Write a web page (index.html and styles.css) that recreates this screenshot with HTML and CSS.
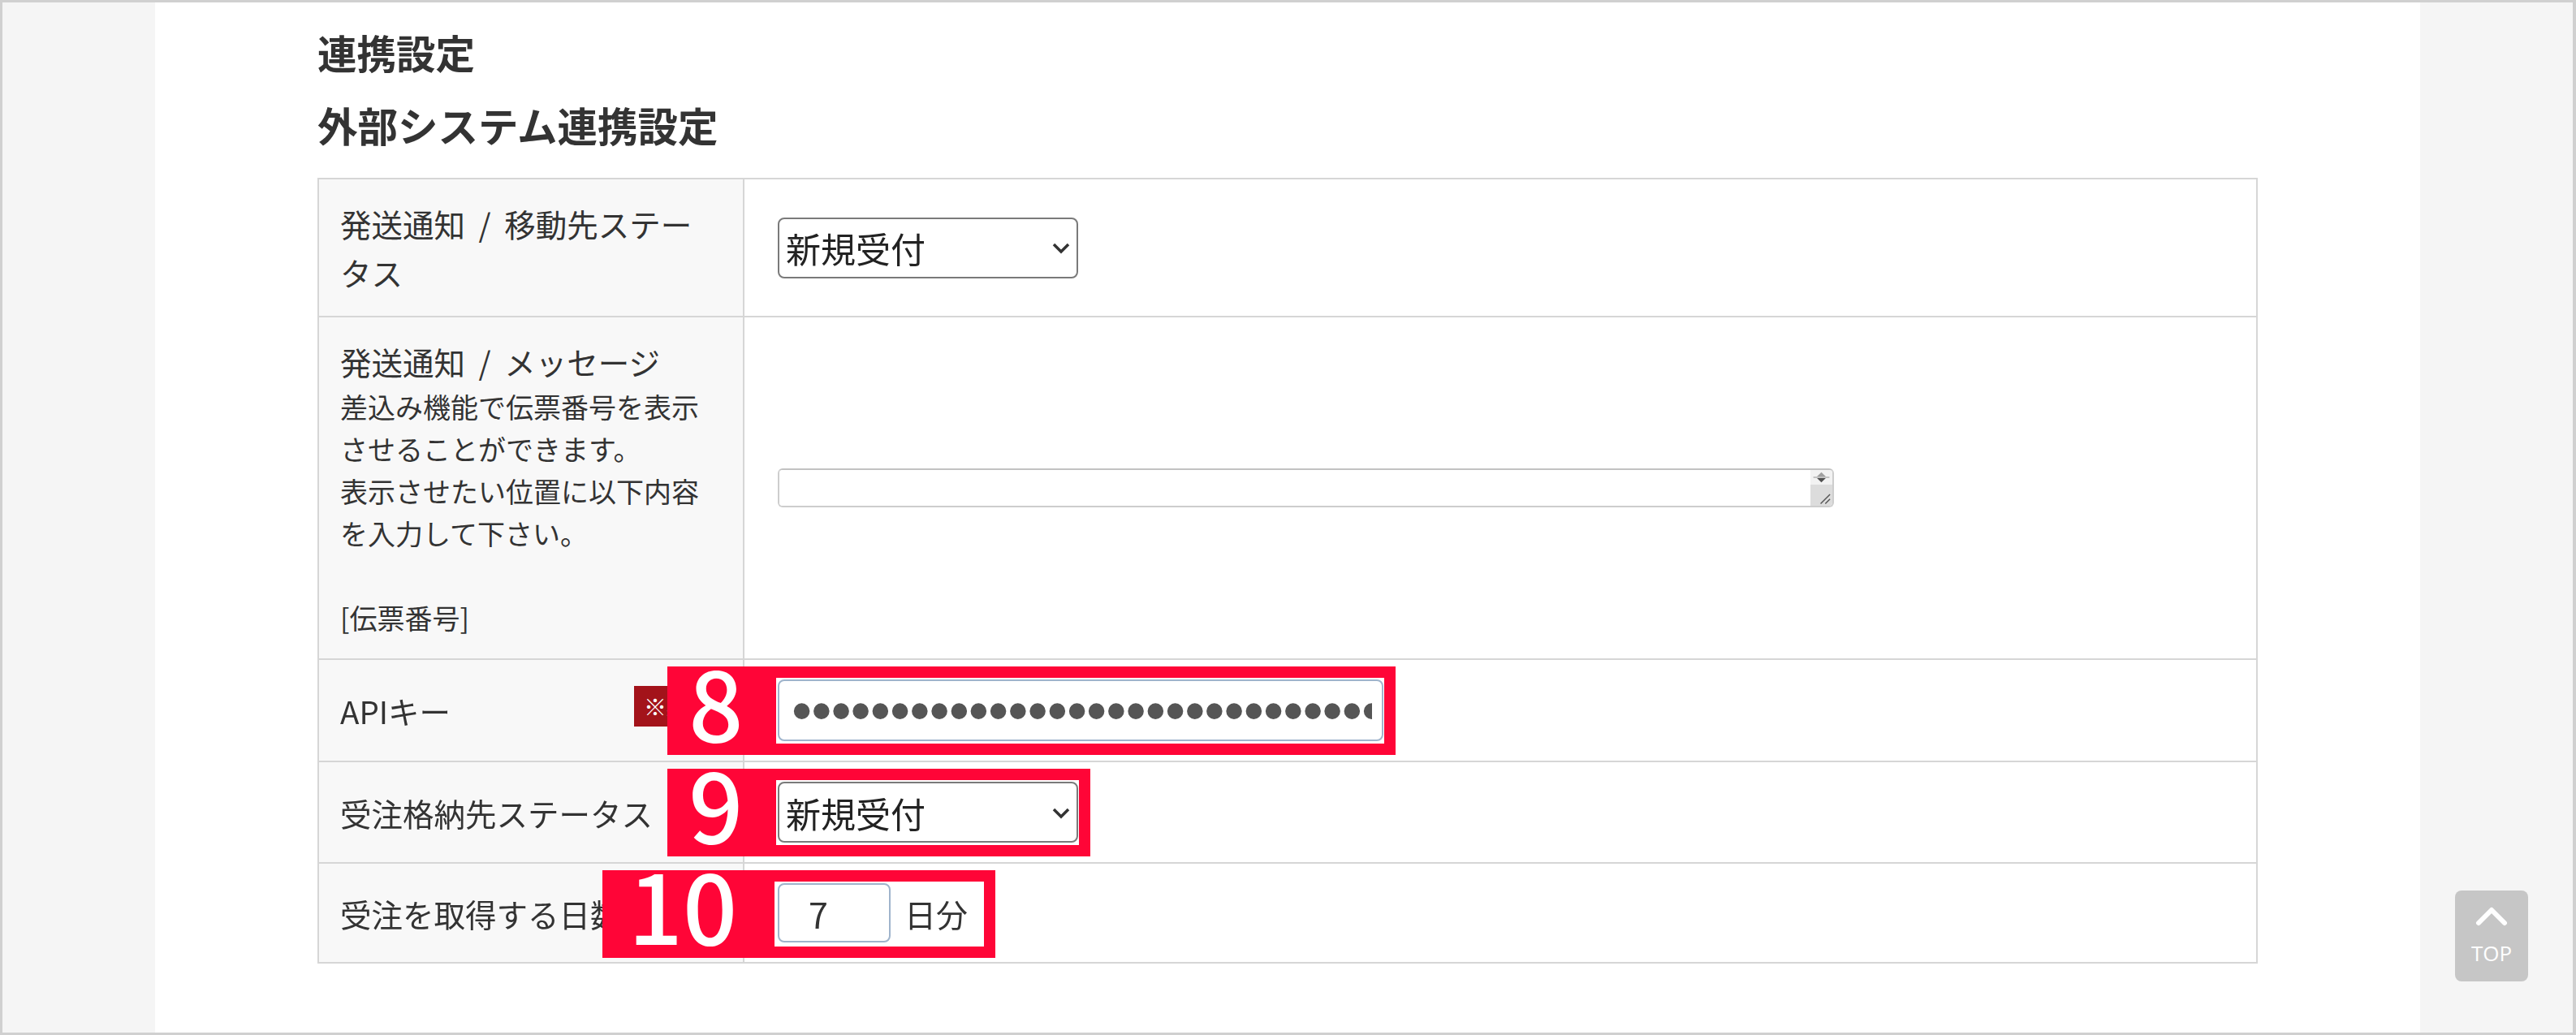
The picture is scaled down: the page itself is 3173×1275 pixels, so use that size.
FILE: index.html
```html
<!DOCTYPE html>
<html lang="ja">
<head>
    <meta charset="UTF-8">
    <meta name="viewport" content="width=device-width, initial-scale=1.0">
    <title>連携設定</title>
    <link rel="stylesheet" href="styles.css">
</head>
<body>

<div class="frame">
    <div class="side"></div>

    <main class="content">
        <h1 class="page-title">連携設定</h1>
        <h2 class="section-title">外部システム連携設定</h2>

        <table class="form-table">
            <tr>
                <th>発送通知 / 移動先ステータス</th>
                <td>
                    <span class="select-wrap">
                        <select class="select">
                            <option>新規受付</option>
                        </select>
                        <svg class="select-arrow" viewBox="0 0 22 14"><path d="M2 2l9 9 9-9"/></svg>
                    </span>
                </td>
            </tr>
            <tr>
                <th>
                    発送通知 / メッセージ
                    <p class="note">差込み機能で伝票番号を表示させることができます。<br>表示させたい位置に以下内容を入力して下さい。<br><br>[伝票番号]</p>
                </th>
                <td>
                    <div class="textarea-box">
                        <textarea class="textarea" rows="1"></textarea>
                        <div class="scrollbar">
                            <span class="scroll-btn">
                                <svg viewBox="0 0 28 20"><path class="arrow-up" d="M8 9l6-6 6 6z"/><path class="arrow-line" d="M3 10h22"/><path class="arrow-down" d="M8 11l6 6 6-6z"/></svg>
                            </span>
                            <span class="scroll-track">
                                <svg viewBox="0 0 28 26"><path d="M13 24l12-12M19 24l6-6"/></svg>
                            </span>
                        </div>
                    </div>
                </td>
            </tr>
            <tr>
                <th>
                    <span class="required">※必須</span>
                    APIキー
                </th>
                <td>
                    <span class="field">
                        <input type="password" class="input input-key" value="abcdefghijklmnopqrstuvwxyz0123456789abcd">
                        <span class="callout"><span class="callout-num">8</span><span class="callout-frame"></span></span>
                    </span>
                </td>
            </tr>
            <tr>
                <th>受注格納先ステータス</th>
                <td>
                    <span class="field">
                        <span class="select-wrap">
                            <select class="select">
                                <option>新規受付</option>
                            </select>
                            <svg class="select-arrow" viewBox="0 0 22 14"><path d="M2 2l9 9 9-9"/></svg>
                        </span>
                        <span class="callout"><span class="callout-num">9</span><span class="callout-frame"></span></span>
                    </span>
                </td>
            </tr>
            <tr>
                <th>受注を取得する日数</th>
                <td>
                    <span class="field">
                        <input type="text" class="input input-days" value="7">
                        <span class="unit">日分</span>
                        <span class="callout callout-days"><span class="callout-num">10</span><span class="callout-frame"></span></span>
                    </span>
                </td>
            </tr>
        </table>
    </main>

    <div class="side"></div>
</div>

<a class="to-top" href="#">
    <svg viewBox="0 0 40 26"><path d="M4 22L20 6l16 16"/></svg>
    <span>TOP</span>
</a>

</body>
</html>
```

FILE: styles.css
```css
* {
    box-sizing: border-box;
}

html,
body {
    margin: 0;
    height: 100%;
}

body {
    font-family: "Noto Sans CJK JP", "Noto Sans", sans-serif;
    color: #333;
    background-color: #fff;
}

.frame {
    display: flex;
    height: 100vh;
    border: 3px solid #d0d0d0;
    border-right-width: 4px;
}

.side {
    width: 188px;
    flex-shrink: 0;
    background-color: #f5f5f5;
}

.content {
    flex: 1;
    padding: 31px 200px 0;
    background-color: #fff;
}

.page-title,
.section-title {
    margin: 0;
    font-size: 48.5px;
    line-height: 60px;
    font-weight: bold;
    color: #333;
}

.page-title {
    margin-bottom: 30px;
}

.section-title {
    margin-bottom: 35px;
    font-size: 49.5px;
}

/* table */

.form-table {
    width: 100%;
    table-layout: fixed;
    border-collapse: collapse;
    border: 2px solid #d6d6d6;
}

.form-table th,
.form-table td {
    border: 2px solid #d6d6d6;
    padding: 24px 41px;
    vertical-align: middle;
    text-align: left;
}

.form-table th {
    width: 524px;
    padding: 24px 36px 24px 26px;
    background-color: #f8f8f8;
    font-weight: normal;
    font-size: 38.5px;
    line-height: 60px;
    word-spacing: 8px;
    color: #333;
}

.note {
    margin: 0;
    font-size: 34px;
    line-height: 52px;
    word-spacing: 0;
}

.required {
    float: right;
    margin-right: -10px;
    padding: 0 12px;
    font-size: 28px;
    line-height: 50px;
    color: #fff;
    background-color: #a3131a;
}

/* inputs */

.select-wrap {
    position: relative;
    display: inline-block;
    vertical-align: middle;
}

.select {
    display: block;
    width: 370px;
    height: 75px;
    padding: 0 0 0 8px;
    font-family: inherit;
    font-size: 43px;
    color: #222;
    background-color: #fff;
    border: 2px solid #7a7a7a;
    border-radius: 8px;
    -webkit-appearance: none;
    appearance: none;
}

.select-arrow {
    position: absolute;
    right: 10px;
    top: 50%;
    width: 22px;
    height: 14px;
    margin-top: -6px;
    fill: none;
    stroke: #333;
    stroke-width: 3.5;
}

.textarea-box {
    display: flex;
    width: 1301px;
    height: 48px;
    border: 2px solid #cdcdcd;
    border-top-color: #c2c2c2;
    border-radius: 6px;
    overflow: hidden;
}

.textarea {
    flex: 1;
    height: 100%;
    border: none;
    resize: none;
    padding: 0 10px;
    font-family: inherit;
    font-size: 34px;
    outline: none;
}

.scrollbar {
    display: flex;
    flex-direction: column;
    width: 27px;
}

.scroll-btn {
    height: 18px;
    background-color: #f2f2f2;
}

.scroll-track {
    flex: 1;
    background-color: #dcdcdc;
}

.scrollbar svg {
    display: block;
    width: 100%;
    height: 100%;
}

.arrow-up {
    fill: #a0a0a0;
}

.arrow-down {
    fill: #505050;
}

.arrow-line {
    stroke: #b0b0b0;
    stroke-width: 1.5;
}

.scroll-track path {
    stroke: #555;
    stroke-width: 1.5;
    fill: none;
}

.input {
    height: 76px;
    font-family: inherit;
    color: #555;
    background-color: #fff;
    border: 2px solid #9fb4cc;
    border-radius: 8px;
    outline: none;
}

.input-key {
    width: 746px;
    padding: 0 12px 0 15px;
    font-family: "Liberation Sans", sans-serif;
    font-size: 72px;
    letter-spacing: -1px;
}

.input-days {
    width: 139px;
    height: 73px;
    padding: 0 0 0 36px;
    font-size: 43px;
    color: #333;
}

.unit {
    margin-left: 17px;
    font-size: 39px;
    color: #333;
}

/* red callouts drawn over the form */

.field {
    position: relative;
    display: inline-flex;
    align-items: center;
    vertical-align: middle;
}

.callout {
    position: absolute;
    top: -16px;
    bottom: -17px;
    left: -136px;
    right: -15px;
    display: flex;
    pointer-events: none;
}

.callout-num {
    display: flex;
    align-items: center;
    justify-content: center;
    width: 120px;
    padding-bottom: 26px;
    background-color: #ff0537;
    color: #fff;
    font-family: "Noto Sans CJK JP", sans-serif;
    font-weight: 500;
    font-size: 118px;
    line-height: 1;
}

.callout-frame {
    flex: 1;
    border: 14px solid #ff0537;
}

.callout-days {
    left: -216px;
    right: -34px;
    bottom: -19px;
}

.callout-days .callout-num {
    width: 198px;
}

/* page top button */

.to-top {
    position: fixed;
    right: 59px;
    bottom: 66px;
    display: flex;
    flex-direction: column;
    align-items: center;
    width: 90px;
    height: 112px;
    padding-top: 18px;
    background-color: #c6c6c6;
    border-radius: 8px;
    color: #fff;
    text-decoration: none;
    font-family: "Open Sans", sans-serif;
    font-size: 26px;
    line-height: 1;
}

.to-top svg {
    width: 40px;
    height: 26px;
    fill: none;
    stroke: #fff;
    stroke-width: 6;
    stroke-linecap: round;
    stroke-linejoin: round;
    margin-bottom: 20px;
}
```
